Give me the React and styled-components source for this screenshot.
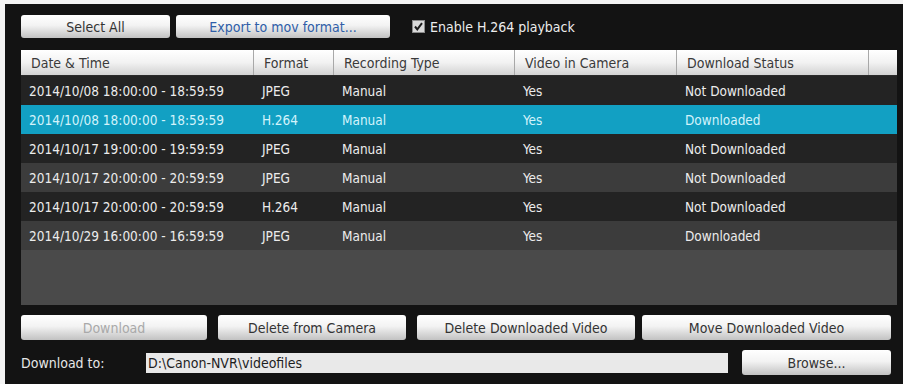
import React from 'react'
import styled, { createGlobalStyle } from 'styled-components'

const GlobalStyle = createGlobalStyle`
  html, body {
    margin: 0;
    padding: 0;
    background: #f4f4f4;
  }
  body {
    font-family: "DejaVu Sans Condensed", "Liberation Sans", Arial, sans-serif;
    font-size: 13px;
  }
`

const columns = [
  { key: 'time', label: 'Date & Time', width: 233 },
  { key: 'format', label: 'Format', width: 80 },
  { key: 'type', label: 'Recording Type', width: 181 },
  { key: 'camera', label: 'Video in Camera', width: 162 },
  { key: 'status', label: 'Download Status', width: 192 },
]

const recordings = [
  { time: '2014/10/08 18:00:00 - 18:59:59', format: 'JPEG', type: 'Manual', camera: 'Yes', status: 'Not Downloaded' },
  { time: '2014/10/08 18:00:00 - 18:59:59', format: 'H.264', type: 'Manual', camera: 'Yes', status: 'Downloaded', selected: true },
  { time: '2014/10/17 19:00:00 - 19:59:59', format: 'JPEG', type: 'Manual', camera: 'Yes', status: 'Not Downloaded' },
  { time: '2014/10/17 20:00:00 - 20:59:59', format: 'JPEG', type: 'Manual', camera: 'Yes', status: 'Not Downloaded' },
  { time: '2014/10/17 20:00:00 - 20:59:59', format: 'H.264', type: 'Manual', camera: 'Yes', status: 'Not Downloaded' },
  { time: '2014/10/29 16:00:00 - 16:59:59', format: 'JPEG', type: 'Manual', camera: 'Yes', status: 'Downloaded' },
]

const gridTemplate = columns.map(c => `${c.width}px`).join(' ') + ' 1fr'

const CheckIcon = () => (
  <svg width="13" height="13" viewBox="0 0 13 13">
    <rect x="0.5" y="0.5" width="12" height="12" fill="#d9d9d9" stroke="#8a8a8a" />
    <path d="M3 6.5 L5.3 9.3 L10 3.2" fill="none" stroke="#1c1c1c" strokeWidth="2" />
  </svg>
)

const App = () => (
  <>
    <GlobalStyle />
    <Panel>
      <Toolbar>
        <Button width={149}>Select All</Button>
        <Button width={214} tone="link">Export to mov format...</Button>
        <CheckLabel>
          <CheckIcon />
          Enable H.264 playback
        </CheckLabel>
      </Toolbar>

      <Table>
        <HeaderRow>
          {columns.map(col => (
            <HeaderCell key={col.key}>{col.label}</HeaderCell>
          ))}
          <HeaderCell />
        </HeaderRow>
        {recordings.map((rec, i) => (
          <Row key={i} shade={rec.selected ? 'selected' : i % 2 ? 'light' : 'dark'}>
            {columns.map(col => (
              <Cell key={col.key}>{rec[col.key]}</Cell>
            ))}
          </Row>
        ))}
        <Empty />
      </Table>

      <ActionBar>
        <Button width={186} tall tone="disabled">Download</Button>
        <Button width={188} tall>Delete from Camera</Button>
        <Button width={218} tall>Delete Downloaded Video</Button>
        <Button width={249} tall>Move Downloaded Video</Button>
      </ActionBar>

      <PathBar>
        <PathLabel>Download to:</PathLabel>
        <PathField>D:\Canon-NVR\videofiles</PathField>
        <Button width={149} tall>Browse...</Button>
      </PathBar>
    </Panel>
  </>
)

const Panel = styled('div')`
  margin: 4px 0 0 5px;
  width: 876px;
  height: 369px;
  padding: 11px 6px 0 16px;
  background: #131313;
  border-right: 1px solid #9a9a9a;
  display: flex;
  flex-direction: column;
`

const Toolbar = styled('div')`
  display: flex;
  align-items: center;
  gap: 6px;
  height: 23px;
`

const Button = styled('div')`
  width: ${p => p.width}px;
  height: ${p => (p.tall ? 25 : 23)}px;
  flex: none;
  display: flex;
  align-items: center;
  justify-content: center;
  border-radius: 3px;
  background: linear-gradient(#ffffff 0%, #f3f3f3 45%, #c2c2c2 100%);
  color: ${p => (p.tone === 'link' ? '#2f5ea8' : p.tone === 'disabled' ? '#a9a9a9' : '#333')};
  font-size: 14px;
`

const CheckLabel = styled('label')`
  display: flex;
  align-items: center;
  gap: 5px;
  margin-left: 16px;
  color: #ececec;
  font-size: 14px;
`

const Table = styled('div')`
  margin-top: 12px;
  height: 255px;
  display: flex;
  flex-direction: column;
  background: #4a4a4a;
`

const HeaderRow = styled('div')`
  display: grid;
  grid-template-columns: ${gridTemplate};
  height: 25px;
  border-bottom: 1px solid #2a2a2a;
  background: linear-gradient(#ffffff 0%, #f2f2f2 50%, #d2d2d2 100%);
`

const HeaderCell = styled('div')`
  display: flex;
  align-items: center;
  padding-left: 10px;
  border-right: 1px solid #a8a8a8;
  color: #3a3a3a;
  font-size: 14px;
  &:last-child {
    border-right: none;
  }
`

const shades = {
  dark: '#232323',
  light: '#3c3c3c',
  selected: '#12a0c3',
}

const Row = styled('div')`
  display: grid;
  grid-template-columns: ${gridTemplate};
  height: 29px;
  background: ${p => shades[p.shade]};
  color: ${p => (p.shade === 'selected' ? '#d3f3fb' : '#ececec')};
  font-size: 13.5px;
`

const Cell = styled('div')`
  display: flex;
  align-items: center;
  padding-left: 8px;
  white-space: nowrap;
`

const Empty = styled('div')`
  flex: 1;
`

const ActionBar = styled('div')`
  display: flex;
  gap: 11px;
  margin-top: 10px;
  & > :last-child {
    margin-left: -4px;
  }
`

const PathBar = styled('div')`
  display: flex;
  align-items: center;
  margin-top: 10px;
`

const PathLabel = styled('div')`
  width: 125px;
  color: #e6e6e6;
  font-size: 14px;
`

const PathField = styled('div')`
  width: 580px;
  height: 20px;
  margin-right: 14px;
  padding-left: 2px;
  display: flex;
  align-items: center;
  background: #e9e9e9;
  color: #1e1e1e;
  font-size: 14px;
`

export default App
